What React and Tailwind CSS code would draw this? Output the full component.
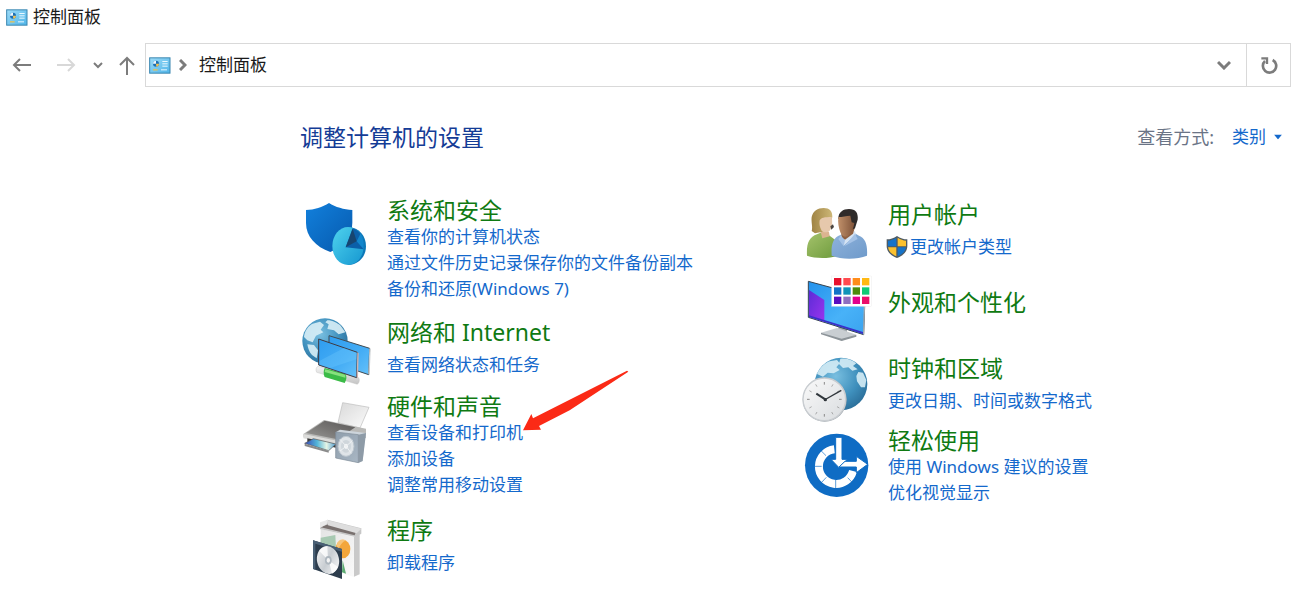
import { useId } from 'react';

function PanelIcon() {
  const id = useId();
  return (
    <svg viewBox="0 0 66 50" className="h-[17px] w-[22px] shrink-0">
      <defs>
        <linearGradient id={id} x1="0" y1="0" x2="1" y2="1">
          <stop offset="0" stopColor="#9edcf8" />
          <stop offset="1" stopColor="#4fb4e8" />
        </linearGradient>
      </defs>
      <rect x="2" y="2" width="61" height="46" fill={`url(#${id})`} stroke="#3a86b0" strokeWidth="3" />
      <circle cx="21" cy="20" r="9" fill="#1c6fb5" />
      <path d="M21 20V11a9 9 0 0 0-9 9z" fill="#eef9ff" />
      <path d="M21 20h9a9 9 0 0 1-8 9z" fill="#f1c254" />
      <path d="M40 13h16M40 20h16M40 27h16M36 38h18" stroke="#e9f8ff" strokeWidth="3" />
      <path d="M12 38h14" stroke="#e3c25a" strokeWidth="4" />
    </svg>
  );
}

function Globe({ cx, cy, r }) {
  const id = useId();
  return (
    <g>
      <defs>
        <radialGradient id={id} cx=".4" cy=".35" r=".7">
          <stop offset="0" stopColor="#79bfe0" />
          <stop offset=".6" stopColor="#3f90bd" />
          <stop offset="1" stopColor="#2a6d98" />
        </radialGradient>
      </defs>
      <circle cx={cx} cy={cy} r={r} fill={`url(#${id})`} />
    </g>
  );
}

function SecurityIcon() {
  return (
    <svg viewBox="30 18 216 204" className="h-[68px] w-[72px] shrink-0 overflow-visible">
      <defs>
        <linearGradient id="shield" x1="0" y1="0" x2="1" y2="1">
          <stop offset="0" stopColor="#1280dc" />
          <stop offset="1" stopColor="#0659ad" />
        </linearGradient>
        <linearGradient id="ball" x1="0" y1="0" x2="1" y2="1">
          <stop offset="0" stopColor="#4fd3ee" />
          <stop offset="1" stopColor="#1596d0" />
        </linearGradient>
      </defs>
      <path d="M48 60C72 60 98 51 117 39c19 12 45 20 70 21v38c0 42-27 72-66 88-44-16-73-46-73-87z" fill="url(#shield)" />
      <path d="M174 111c34 2 54 26 54 58 0 34-26 56-54 56z" fill="#0c78b8" />
      <ellipse cx="174" cy="168" rx="47" ry="57" fill="url(#ball)" />
      <path d="M188 114l-21 58 54 6c2-32-10-56-33-64z" fill="#0b5fa8" />
      <path d="M188 116l12 38-33 18z" fill="#17456f" />
      <path d="M200 154l12-24c8 14 10 30 9 48z" fill="#1186cc" />
    </svg>
  );
}

function NetworkIcon() {
  return (
    <svg viewBox="30 27 216 204" className="h-[68px] w-[72px] shrink-0 overflow-visible">
      <defs>
        <linearGradient id="screen" x1="0" y1="0" x2="1" y2="1">
          <stop offset="0" stopColor="#2f9df0" />
          <stop offset=".6" stopColor="#45adf5" />
          <stop offset="1" stopColor="#64c1fa" />
        </linearGradient>
        <linearGradient id="plug" x1="0" y1="0" x2="0" y2="1">
          <stop offset="0" stopColor="#f4f4f4" />
          <stop offset="1" stopColor="#c4c4c4" />
        </linearGradient>
      </defs>
      <Globe cx="105" cy="108" r="68" />
      <path d="M42 96c2-20 14-34 26-40l22-6 12 10-10 14 8 8-22 10-10 20-16-6zM52 118l20 2 12 16-4 24-14-10c-8-8-12-20-14-32zM112 46c16 0 30 8 40 16l14 20-20 6-14-12-20-4 4-14-10-6z" fill="#d8eef6" opacity=".9" />
      <path d="M117 92l122 38-3 79-119-40z" fill="url(#screen)" stroke="#414c54" strokeWidth="3" />
      <path d="M238 130l4 3-3 76-4-2z" fill="#c9ced1" />
      <path d="M84 184l122 34c4 6 2 16-4 20L80 202c-4-6-2-16 4-18z" fill="url(#plug)" stroke="#b5b5b5" />
      <path d="M104 189l62 17c5 7 4 18-2 28l-60-18c-4-7-4-21 0-27z" fill="#3bbb47" />
      <path d="M106 193l60 16v9l-62-17z" fill="#88e07d" />
      <path d="M86 102l116 40-2 76-114-38z" fill="url(#screen)" stroke="#3f3a42" strokeWidth="3" />
      <path d="M88 168l74-39 38 14-1 20-78 26-33-11z" fill="#7bd0ff" opacity=".28" />
      <path d="M202 142l4 3-2 73-4-1z" fill="#d3b3af" />
    </svg>
  );
}

function PrinterIcon() {
  return (
    <svg viewBox="30 6 216 204" className="h-[68px] w-[72px] shrink-0 overflow-visible">
      <defs>
        <linearGradient id="paper" x1="0" y1="0" x2="1" y2="1">
          <stop offset="0" stopColor="#d9d9d9" />
          <stop offset="1" stopColor="#fbfbfb" />
        </linearGradient>
        <linearGradient id="lid" x1="0" y1="1" x2="1" y2="0">
          <stop offset="0" stopColor="#9a9a98" />
          <stop offset=".5" stopColor="#777573" />
          <stop offset="1" stopColor="#595757" />
        </linearGradient>
        <linearGradient id="photo" x1="0" y1="0" x2="1" y2="0">
          <stop offset="0" stopColor="#3546b8" />
          <stop offset=".4" stopColor="#54b6d8" />
          <stop offset=".7" stopColor="#e6f5e6" />
          <stop offset="1" stopColor="#4b9ad0" />
        </linearGradient>
        <linearGradient id="speaker" x1="0" y1="0" x2="1" y2="1">
          <stop offset="0" stopColor="#8e9dab" />
          <stop offset="1" stopColor="#a9b7c4" />
        </linearGradient>
      </defs>
      <path d="M158 38l79 14-27 62-66-16z" fill="url(#paper)" stroke="#bdbdbd" strokeWidth="2" />
      <path d="M40 132l62-42 126 26v28l-86 18-102-22z" fill="#b9b9b7" />
      <path d="M48 129l56-37 92 20-54 36z" fill="url(#lid)" />
      <path d="M40 132l102 20v12L40 145z" fill="#dcdcda" />
      <path d="M52 145l86 18v10l-86-18z" fill="#3b3b3b" />
      <path d="M44 160l26-14 68 16-22 20z" fill="url(#photo)" stroke="#555" strokeWidth="2" />
      <path d="M44 161l72 21v6l-72-20z" fill="#8a8a8a" />
      <path d="M137 127l13-8 77 10-9 84-13 5z" fill="#cdd5dc" />
      <path d="M205 134l23-5-10 84-13 6z" fill="#8e9ba7" />
      <path d="M137 126l68 8v84l-68-14z" fill="url(#speaker)" stroke="#7d8b97" strokeWidth="2" />
      <ellipse cx="168" cy="169" rx="24" ry="30" fill="#dfe4e8" stroke="#bcc6ce" strokeWidth="3" />
      <ellipse cx="168" cy="169" rx="15" ry="19" fill="#cfd6db" />
      <ellipse cx="168" cy="169" rx="6" ry="8" fill="#f5f7f8" />
      <path d="M150 148l18 20 16 22M187 152l-19 17-18 14" stroke="#eef1f3" strokeWidth="3" fill="none" />
    </svg>
  );
}

function ProgramsIcon() {
  return (
    <svg viewBox="30 21 216 204" className="h-[68px] w-[72px] shrink-0 overflow-visible">
      <defs>
        <linearGradient id="box" x1="0" y1="0" x2="1" y2="1">
          <stop offset="0" stopColor="#e4e4e4" />
          <stop offset="1" stopColor="#fafafa" />
        </linearGradient>
        <linearGradient id="disc" x1="0" y1="0" x2="1" y2="1">
          <stop offset="0" stopColor="#f5f5f5" />
          <stop offset=".5" stopColor="#c8cdd2" />
          <stop offset="1" stopColor="#fff" />
        </linearGradient>
      </defs>
      <path d="M92 72l100 24v120l-100-32z" fill="url(#box)" />
      <path d="M192 96l17-10v122l-17 7z" fill="#c9c9c9" />
      <path d="M90 66l22-22 102 26v16l-18 10-106-24z" fill="#c7c7c7" />
      <path d="M92 67l24-10 82 22-4 12z" fill="#79716f" />
      <path d="M110 45l104 26-14 14-86-24z" fill="#dedede" />
      <path d="M90 52l24-8-4 14-20 10z" fill="#eaeaea" />
      <path d="M92 98l44-8 2 40-46-10z" fill="#a7c9b2" />
      <ellipse cx="159" cy="132" rx="22" ry="28" fill="#f3a63b" />
      <path d="M140 120c4-16 16-20 28-14-10 4-22 18-24 34z" fill="#f7c479" />
      <path d="M158 166l10 40-12-4z" fill="#5cab72" />
      <path d="M69 106l87 26v90l-87-30z" fill="#2d3d4d" />
      <path d="M69 106l87 26v8l-80-24v78l-7-3z" fill="#4a6075" />
      <ellipse cx="114" cy="165" rx="33" ry="42" transform="rotate(-12 114 165)" fill="url(#disc)" />
      <path d="M114 165L88 138c6-8 14-13 24-14zM116 166l28 20c-4 8-10 15-18 20z" fill="#fff" opacity=".8" />
      <ellipse cx="115" cy="166" rx="10" ry="13" fill="#aeb7bf" />
      <ellipse cx="115" cy="166" rx="5" ry="7" fill="#f4f4f4" />
    </svg>
  );
}

function UsersIcon() {
  return (
    <svg viewBox="18 3 216 204" className="h-[68px] w-[72px] shrink-0 overflow-visible">
      <defs>
        <linearGradient id="green" x1="0" y1="0" x2="1" y2="1">
          <stop offset="0" stopColor="#a5c36c" />
          <stop offset="1" stopColor="#6d9a3c" />
        </linearGradient>
        <linearGradient id="blue" x1="0" y1="0" x2="1" y2="1">
          <stop offset="0" stopColor="#8fb3dc" />
          <stop offset="1" stopColor="#6f9aca" />
        </linearGradient>
        <linearGradient id="hair" x1="0" y1="0" x2="1" y2="0">
          <stop offset="0" stopColor="#a08444" />
          <stop offset="1" stopColor="#cdb777" />
        </linearGradient>
        <linearGradient id="skin" x1="0" y1="0" x2="1" y2="0">
          <stop offset="0" stopColor="#c0906a" />
          <stop offset="1" stopColor="#80543a" />
        </linearGradient>
      </defs>
      <path d="M36 182c-2-36 6-56 30-64l14-6 24 10 26 20v40c-34 10-70 8-94 0z" fill="url(#green)" />
      <path d="M76 108l6 22 22-6-2-14z" fill="#dbb490" />
      <path d="M50 108c4-12-2-26 0-42 4-18 18-27 36-27 18 0 26 10 26 26l-4 20-16 24-32 6z" fill="url(#hair)" />
      <path d="M74 76c4-8 14-10 36-10 3 16 2 28-4 38-6 9-18 11-26 3-6-10-8-21-6-31z" fill="#e6c8ac" />
      <path d="M106 94l8-6 3 8-8 8z" fill="#4b4540" />
      <path d="M110 182c-2-34 4-54 26-62l10-4 32-2 14 8c20 8 26 28 24 60-30 12-76 12-106 0z" fill="url(#blue)" />
      <path d="M136 122l10 30 36-32-2-12z" fill="#d4e3f3" />
      <path d="M138 104l2 24 10 6 24-18 6-20z" fill="#8f6041" />
      <path d="M130 70c0-18 14-28 32-28 20 0 28 12 26 32l-8 26-20 8z" fill="#2f2b2a" />
      <path d="M130 66c12 0 24-4 36-4l4 20 8 2c-2 16-8 30-20 40-8 4-16 0-22-12-5-14-8-30-6-46z" fill="url(#skin)" />
      <path d="M146 154l4-18-12-14-8 10z" fill="#a4c2e6" />
      <path d="M180 116l-32 38 40-22z" fill="#a4c2e6" />
    </svg>
  );
}

const SWATCHES = [
  ['#e8112d', '#ff4a4f', '#ff8c1a', '#ffb914'],
  ['#1173c7', '#0f93b8', '#4c8b0b', '#0fcb75'],
  ['#5a0fc0', '#8f6fc0', '#e3008c', '#ea0f6a'],
];

function AppearanceIcon() {
  return (
    <svg viewBox="18 -6 216 204" className="h-[68px] w-[72px] shrink-0 overflow-visible">
      <defs>
        <linearGradient id="desktop" x1="0" y1="0" x2="1" y2="1">
          <stop offset="0" stopColor="#2492ec" />
          <stop offset=".6" stopColor="#48b2f8" />
          <stop offset="1" stopColor="#3aa2ee" />
        </linearGradient>
        <linearGradient id="purple" x1="0" y1="0" x2="1" y2="1">
          <stop offset="0" stopColor="#5c2bd6" />
          <stop offset="1" stopColor="#9a35ee" />
        </linearGradient>
      </defs>
      <path d="M130 168l26 6v18l-26-4z" fill="#a5abb0" />
      <path d="M78 188l48-14 58 20-44 18z" fill="#c9ced2" />
      <path d="M78 188l62 18 44-12v6l-44 13-62-20z" fill="#8d9499" />
      <path d="M40 34l170 46-4 114L40 142z" fill="url(#desktop)" stroke="#39444e" strokeWidth="3" />
      <path d="M42 60l46 30v66l-46-16z" fill="url(#purple)" />
      <path d="M42 136l162 50v6L42 141z" fill="#3a2fc8" />
      <path d="M207 82l4 1-4 112-3-2z" fill="#aab3ba" />
      <rect x="110" y="18" width="120" height="91" fill="#fff" stroke="#e3e3e3" />
      {SWATCHES.map((row, y) =>
        row.map((fill, x) => (
          <rect key={fill} x={117 + x * 28} y={24 + y * 28} width="22" height="22" fill={fill} />
        ))
      )}
    </svg>
  );
}

function ClockIcon() {
  return (
    <svg viewBox="18 0 216 204" className="h-[68px] w-[72px] shrink-0 overflow-visible">
      <defs>
        <linearGradient id="dial" x1="0" y1="0" x2="1" y2="1">
          <stop offset="0" stopColor="#fafafa" />
          <stop offset="1" stopColor="#d9dcdf" />
        </linearGradient>
      </defs>
      <Globe cx="138" cy="102" r="79" />
      <path d="M66 72c8-18 22-32 38-38l22-4 8 10-10 12 10 8-18 10-18-2-14 12zM136 26c18-2 34 2 48 14l-10 8 14 10-16 4-12-10-16 2-12-12zM190 66l14 2 10 22-4 22-12 0-12-18-2-16z" fill="#d5ecf5" opacity=".9" />
      <circle cx="89" cy="149" r="66" fill="#a3aab0" />
      <circle cx="88" cy="148" r="64" fill="url(#dial)" stroke="#c9cdd1" strokeWidth="4" />
      <g stroke="#8a8a8a" strokeWidth="3">
        <path d="M88 96v8M88 192v8M36 148h8M132 148h8" />
        <path d="M62 103l4 7M114 103l-4 7M62 193l4-7M114 193l-4-7M43 122l7 4M133 122l-7 4M43 174l7-4M133 174l-7-4" strokeWidth="2" />
      </g>
      <path d="M64 131l28 18" stroke="#30363b" strokeWidth="6" />
      <path d="M88 150l51-29" stroke="#30363b" strokeWidth="4" />
      <circle cx="91" cy="149" r="5" fill="#30363b" />
    </svg>
  );
}

function EaseIcon() {
  return (
    <svg viewBox="18 3 216 204" className="h-[68px] w-[72px] shrink-0 overflow-visible">
      <circle cx="125" cy="121" r="95" fill="#0f6cc4" />
      <path d="M118 73A52 52 0 1 0 174 138" fill="none" stroke="#fff" strokeWidth="24" />
      <path d="M76 75l17 17M54 124h26M78 174l16-17M122 163v28M158 158l17 18" stroke="#0f6cc4" strokeWidth="2" />
      <path d="M122 37h19v66h16l-25 25-24-25h14z" fill="#fff" stroke="#0f6cc4" strokeWidth="3" />
      <path d="M132 126l18-17h34V94l34 24-34 25v-17z" fill="#fff" stroke="#0f6cc4" strokeWidth="3" />
    </svg>
  );
}

function AdminShield() {
  return (
    <svg viewBox="6 0 66 70" className="h-6 w-[22px] shrink-0 overflow-visible">
      <path d="M33 2C23 9 13 12 2 12v20c0 18 14 30 31 36 17-6 31-18 31-36V12C53 12 43 9 33 2z" fill="#4e5a63" />
      <path d="M31 7C23 12 14 15 6 16v17h25z" fill="#1673c8" />
      <path d="M35 7c8 5 17 8 25 9v17H35z" fill="#fbc12e" />
      <path d="M6 36h25v27C17 57 8 49 6 36z" fill="#fbc12e" />
      <path d="M60 36H35v27c14-6 23-14 25-27z" fill="#1673c8" />
    </svg>
  );
}

function RedArrow() {
  return (
    <svg viewBox="0 0 318 186" className="pointer-events-none absolute bottom-[14px] left-full h-[62px] w-[106px]">
      <path d="M0 181l25-49 5 13L312 2l4 3-176 116L48 168l6 11z" fill="#fb2a16" />
    </svg>
  );
}

const LEFT = [
  {
    title: '系统和安全',
    icon: SecurityIcon,
    links: [
      { text: '查看你的计算机状态' },
      { text: '通过文件历史记录保存你的文件备份副本' },
      { text: '备份和还原(Windows 7)' },
    ],
  },
  { title: '网络和 Internet', icon: NetworkIcon, spacing: 'mt-3', links: [{ text: '查看网络状态和任务' }] },
  {
    title: '硬件和声音',
    icon: PrinterIcon,
    spacing: 'mt-2.5',
    links: [{ text: '查看设备和打印机', arrow: true }, { text: '添加设备' }, { text: '调整常用移动设置' }],
  },
  { title: '程序', icon: ProgramsIcon, spacing: 'mt-3.5', links: [{ text: '卸载程序' }] },
];

const RIGHT = [
  { title: '用户帐户', icon: UsersIcon, links: [{ text: '更改帐户类型', shield: true }] },
  { title: '外观和个性化', icon: AppearanceIcon, spacing: 'mt-1', links: [] },
  { title: '时钟和区域', icon: ClockIcon, spacing: 'mt-3.5', links: [{ text: '更改日期、时间或数字格式' }] },
  {
    title: '轻松使用',
    icon: EaseIcon,
    spacing: 'mt-2',
    links: [{ text: '使用 Windows 建议的设置' }, { text: '优化视觉显示' }],
  },
];

function Category({ title, icon: Icon, links, spacing = '' }) {
  const single = links.length < 2;
  return (
    <section className={`flex gap-[15px] ${single ? 'items-center' : 'items-start'} ${spacing}`}>
      <Icon />
      <div className={`flex flex-col items-start ${single ? 'gap-1.5' : ''}`}>
        <h2 className="text-[23px] leading-7 text-[#0f7a12]">
          <a href="#" className="hover:underline">{title}</a>
        </h2>
        {links.length > 0 && (
          <ul className="text-[17px] leading-[26px] text-[#1469cc]">
            {links.map((link) => (
              <li key={link.text} className="whitespace-nowrap">
                <a href="#" className="relative flex w-fit items-center hover:underline">
                  {link.shield && <AdminShield />}
                  {link.text}
                  {link.arrow && <RedArrow />}
                </a>
              </li>
            ))}
          </ul>
        )}
      </div>
    </section>
  );
}

function NavBar() {
  return (
    <nav className="mt-[9px] flex h-11 items-center pr-1 text-[#7c7c7c]">
      <button aria-label="后退" className="flex w-11 justify-center">
        <svg viewBox="0 0 20 20" className="size-5" fill="none" stroke="currentColor" strokeWidth="2">
          <path d="M19 10H2M8 4l-6 6 6 6" />
        </svg>
      </button>
      <button aria-label="前进" className="flex w-11 justify-center text-[#d8d8d8]">
        <svg viewBox="0 0 20 20" className="size-5" fill="none" stroke="currentColor" strokeWidth="2">
          <path d="M1 10h17M12 4l6 6-6 6" />
        </svg>
      </button>
      <button aria-label="最近浏览的位置" className="flex w-5 justify-center">
        <svg viewBox="0 0 10 8" className="h-2 w-2.5" fill="none" stroke="currentColor" strokeWidth="2">
          <path d="M1 2l4 4 4-4" />
        </svg>
      </button>
      <button aria-label="上移" className="flex w-[37px] justify-center">
        <svg viewBox="0 0 20 20" className="size-5" fill="none" stroke="currentColor" strokeWidth="2">
          <path d="M10 20V3M3 10l7-7 7 7" />
        </svg>
      </button>
      <div className="flex h-full flex-1 items-center border border-[#d9d9d9] pl-[3px]">
        <PanelIcon />
        <svg viewBox="0 0 8 12" className="ml-2 h-3 w-2" fill="none" stroke="currentColor" strokeWidth="3">
          <path d="M1 1l5 5-5 5" />
        </svg>
        <button className="ml-3 text-[17px] text-[#1a1a1a]">控制面板</button>
        <button aria-label="历史记录" className="ml-auto flex h-full w-11 items-center justify-center">
          <svg viewBox="0 0 14 10" className="h-2.5 w-3.5" fill="none" stroke="currentColor" strokeWidth="3">
            <path d="M1 2l6 6 6-6" />
          </svg>
        </button>
        <button aria-label="刷新" className="flex h-full w-11 items-center justify-center border-l border-[#d9d9d9]">
          <svg viewBox="0 0 54 54" className="size-[18px]" fill="none" stroke="currentColor" strokeWidth="8">
            <path d="M38 12A20 20 0 1 1 15 15" />
            <path d="M4 7h17v17" strokeWidth="7" />
          </svg>
        </button>
      </div>
    </nav>
  );
}

export default function App() {
  return (
    <div className="min-h-screen bg-white font-['Noto_Sans','Noto_Sans_CJK_SC',sans-serif]">
      <header className="flex h-[34px] items-center gap-[5px] pl-1.5 text-[17px] text-[#1a1a1a]">
        <PanelIcon />
        <span>控制面板</span>
      </header>
      <NavBar />
      <main className="pl-[300px]">
        <div className="mt-8 flex items-center justify-between pr-[13px]">
          <h1 className="text-[23px] leading-9 text-[#143c96]">调整计算机的设置</h1>
          <div className="flex items-center">
            <label htmlFor="view" className="mr-[18px] text-[18px] text-[#6a7486]">查看方式:</label>
            <div className="relative">
              <select id="view" className="block w-[50px] appearance-none bg-transparent text-[17px] text-[#1469cc] outline-none">
                <option>类别</option>
                <option>大图标</option>
                <option>小图标</option>
              </select>
              <svg viewBox="0 0 8 5" className="pointer-events-none absolute top-1/2 right-0 h-[5px] w-2 -translate-y-1/2">
                <path d="M0 0h8L4 5z" fill="#1469cc" />
              </svg>
            </div>
          </div>
        </div>
        <div className="mt-[41px] grid grid-cols-2 gap-x-[7px]">
          <div>
            {LEFT.map((item) => <Category key={item.title} {...item} />)}
          </div>
          <div>
            {RIGHT.map((item) => <Category key={item.title} {...item} />)}
          </div>
        </div>
      </main>
    </div>
  );
}
